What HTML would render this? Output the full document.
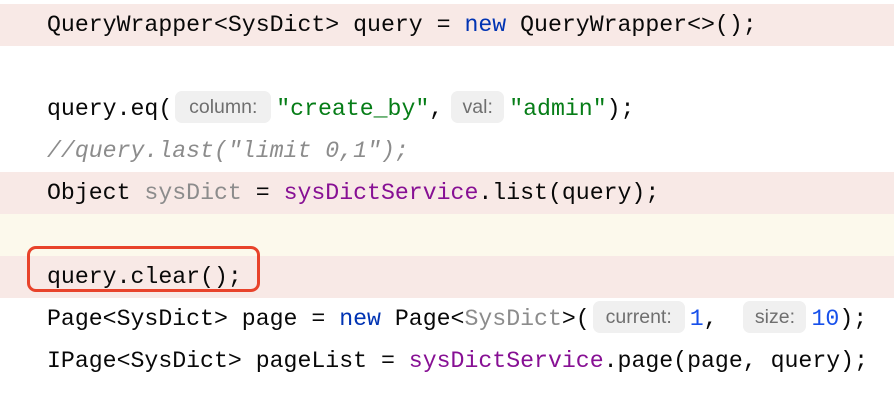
<!DOCTYPE html>
<html><head><style>
body{margin:0;width:894px;height:404px;background:#fff;overflow:hidden;position:relative}
.l{position:absolute;left:0;width:894px;height:42px;line-height:42px;font-family:"Liberation Mono",monospace;font-size:23.2px;color:#080808;white-space:pre}
.t{position:absolute;left:47px;top:0}
.p{background:#f8e9e6}.y{background:#fcf9ec}
.k{color:#0033b3}.s{color:#067d17}.m{color:#871094}.n{color:#1750eb}.g{color:#8c8c8c}.c{color:#8c8c8c;font-style:italic}
.h{display:inline-block;height:32px;line-height:32px;vertical-align:middle;margin:0 5px 4px 3px;background:#f0f0f0;border-radius:7px;font-family:"Liberation Sans",sans-serif;font-size:19.5px;color:#6f6f6f;text-align:center}
.box{position:absolute;left:27px;top:246px;width:227px;height:40px;border:3.5px solid #e8432b;border-radius:9px}
</style></head><body>
<div class="l p" style="top:4px"><span class="t">QueryWrapper&lt;SysDict&gt; query = <span class="k">new</span> QueryWrapper&lt;&gt;();</span></div>
<div class="l" style="top:88px"><span class="t">query.eq(<span class="h" style="width:96px">column:</span><span class="s">"create_by"</span>,<span class="h" style="width:53px;margin-left:8px">val:</span><span class="s">"admin"</span>);</span></div>
<div class="l" style="top:130px"><span class="t c">//query.last("limit 0,1");</span></div>
<div class="l p" style="top:172px"><span class="t">Object <span class="g">sysDict</span> = <span class="m">sysDictService</span>.list(query);</span></div>
<div class="l y" style="top:214px"></div>
<div class="l p" style="top:256px"><span class="t">query.clear();</span></div>
<div class="l" style="top:298px"><span class="t">Page&lt;SysDict&gt; page = <span class="k">new</span> Page&lt;<span class="g">SysDict</span>&gt;(<span class="h" style="width:92px">current:</span><span class="n">1</span>, <span class="h" style="width:63px;margin-left:12px">size:</span><span class="n">10</span>);</span></div>
<div class="l" style="top:340px"><span class="t">IPage&lt;SysDict&gt; pageList = <span class="m">sysDictService</span>.page(page, query);</span></div>
<div class="box"></div>
</body></html>
